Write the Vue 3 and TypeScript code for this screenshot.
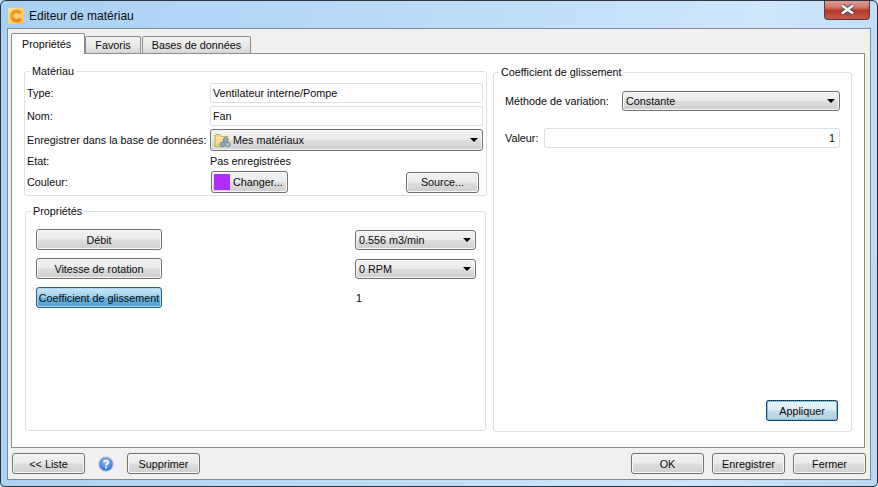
<script setup lang="ts">
const tabs = ['Propriétés', 'Favoris', 'Bases de données']
</script>

<template>
  <div class="window">
    <header class="titlebar">
      <svg class="app-icon" width="16" height="16" viewBox="0 0 16 16">
        <defs>
          <linearGradient id="appbg" x1="0" y1="0" x2="1" y2="1">
            <stop offset="0" stop-color="#fde3a0" />
            <stop offset="1" stop-color="#f8bd4e" />
          </linearGradient>
          <linearGradient id="appc" x1="0" y1="0" x2="1" y2="1">
            <stop offset="0" stop-color="#f6a21e" />
            <stop offset="1" stop-color="#e9820c" />
          </linearGradient>
        </defs>
        <rect width="16" height="16" rx="1" fill="url(#appbg)" />
        <path d="M12.6 5.4A4.8 4.8 0 1 0 12.6 10.6" fill="none" stroke="url(#appc)" stroke-width="3.4" />
      </svg>
      <span class="title">Editeur de matériau</span>
      <div class="close" aria-label="Fermer">
        <svg width="17" height="11" viewBox="0 0 17 11">
          <path d="M3 1.5 14 9.5M14 1.5 3 9.5" stroke="#46505c" stroke-width="4.4" />
          <path d="M3 1.5 14 9.5M14 1.5 3 9.5" stroke="#f4f6f8" stroke-width="2.6" />
        </svg>
      </div>
    </header>

    <main class="panel">
      <nav class="tabs">
        <div v-for="(t, i) in tabs" :key="t" class="tab" :class="{ active: i === 0 }">{{ t }}</div>
      </nav>

      <section class="pane">
        <div class="col-left">
          <fieldset class="group g-mat">
            <legend>Matériau</legend>
            <div class="row r-type">
              <span class="lbl">Type:</span>
              <div class="input">Ventilateur interne/Pompe</div>
            </div>
            <div class="row r-nom">
              <span class="lbl">Nom:</span>
              <div class="input">Fan</div>
            </div>
            <div class="row r-db">
              <span class="lbl">Enregistrer dans la base de données:</span>
              <div class="btn combo combo-db">
                <svg class="folder" width="18" height="18" viewBox="0 0 18 18">
                  <path d="M1 4.5V15h13V5.5H7.5L6 3.5H2z" fill="#f4dc8c" stroke="#c9a850" />
                  <path d="M1.5 7h12" stroke="#fff4c8" />
                  <circle cx="11.5" cy="9" r="2.4" fill="#8fa9c4" stroke="#5a7390" stroke-width=".7" />
                  <circle cx="8.4" cy="13.4" r="2.4" fill="#8fa9c4" stroke="#5a7390" stroke-width=".7" />
                  <circle cx="14" cy="13.6" r="2.4" fill="#a9bdd2" stroke="#5a7390" stroke-width=".7" />
                </svg>
                <span>Mes matériaux</span>
                <i class="arrow"></i>
              </div>
            </div>
            <div class="row r-etat">
              <span class="lbl">Etat:</span>
              <span class="val">Pas enregistrées</span>
            </div>
            <div class="row r-col">
              <span class="lbl">Couleur:</span>
              <div class="btn btn-change"><i class="swatch"></i><span>Changer...</span></div>
              <div class="btn btn-source">Source...</div>
            </div>
          </fieldset>

          <fieldset class="group g-prop">
            <legend>Propriétés</legend>
            <div class="prop">
              <div class="btn btn-prop">Débit</div>
              <div class="btn combo combo-prop"><span>0.556 m3/min</span><i class="arrow"></i></div>
            </div>
            <div class="prop">
              <div class="btn btn-prop">Vitesse de rotation</div>
              <div class="btn combo combo-prop"><span>0 RPM</span><i class="arrow"></i></div>
            </div>
            <div class="prop">
              <div class="btn btn-prop selected">Coefficient de glissement</div>
              <span class="prop-val">1</span>
            </div>
          </fieldset>
        </div>

        <fieldset class="group g-coef">
          <legend>Coefficient de glissement</legend>
          <div class="coef-row first">
            <span class="lbl-m">Méthode de variation:</span>
            <div class="btn combo combo-var"><span>Constante</span><i class="arrow"></i></div>
          </div>
          <div class="coef-row second">
            <span class="lbl-v">Valeur:</span>
            <div class="input num">1</div>
          </div>
          <div class="apply-wrap">
            <div class="btn btn-apply">Appliquer</div>
          </div>
        </fieldset>
      </section>

      <footer class="footer">
        <div class="btn btn-foot">&lt;&lt; Liste</div>
        <svg class="help" width="16" height="16" viewBox="0 0 16 16">
          <defs>
            <radialGradient id="helpbg" cx=".5" cy=".35" r=".7">
              <stop offset="0" stop-color="#9cc2f5" />
              <stop offset="1" stop-color="#2a62c8" />
            </radialGradient>
          </defs>
          <circle cx="8" cy="8" r="7" fill="url(#helpbg)" stroke="#8eb0e4" />
          <path d="M5.9 6.2C6 3.9 10.2 3.9 10.2 6.2 10.2 7.8 8 7.8 8 9.6" fill="none" stroke="#fff" stroke-width="1.7" />
          <rect x="7.1" y="10.6" width="1.8" height="1.8" fill="#fff" />
        </svg>
        <div class="btn btn-foot">Supprimer</div>
        <div class="spacer"></div>
        <div class="btn btn-foot">OK</div>
        <div class="btn btn-foot">Enregistrer</div>
        <div class="btn btn-foot">Fermer</div>
      </footer>
    </main>
  </div>
</template>

<style>
html, body { margin: 0; background: #b9d7f4; }
</style>

<style scoped>
.window {
  box-sizing: border-box;
  width: 878px;
  height: 487px;
  display: flex;
  flex-direction: column;
  padding: 0 6px 6px;
  border: 1px solid #2b3440;
  border-radius: 6px 6px 5px 5px;
  background: linear-gradient(100deg, #a9d0f3 0%, #bcdcf8 45%, #cfe6fb 80%, #b9d8f5 100%);
  font-family: "Liberation Sans", Arial, sans-serif;
  font-size: 10.8px;
  color: #0a0a0a;
  overflow: hidden;
}
.titlebar {
  height: 27px;
  flex: none;
  display: flex;
  align-items: center;
  box-sizing: border-box;
  padding-top: 2px;
  padding-left: 1px;
  position: relative;
}
.title { margin-left: 5px; font-size: 12px; color: #0c0c0c; }
.close {
  position: absolute;
  top: -1px;
  right: 1px;
  width: 46px;
  height: 20px;
  box-sizing: border-box;
  border: 1px solid #5c3a3a;
  border-top: none;
  border-radius: 0 0 4px 4px;
  background: linear-gradient(#e0a49a 0, #d0766a 40%, #b8352a 55%, #c45a48 100%);
  display: flex;
  align-items: center;
  justify-content: center;
}
.panel {
  flex: 1;
  min-height: 0;
  box-sizing: border-box;
  display: flex;
  flex-direction: column;
  background: #f0f0f0;
  border: 1px solid #848a90;
  padding: 3px 5px 0 3px;
}
.tabs { display: flex; height: 21px; flex: none; align-items: flex-end; position: relative; z-index: 1; }
.tab {
  box-sizing: border-box;
  height: 17px;
  border: 1px solid #8d8d8d;
  border-bottom: none;
  margin-right: 1px;
  display: flex;
  align-items: center;
  white-space: nowrap;
  background: linear-gradient(#f3f3f3, #ececec 45%, #d6d6d6);
  border-radius: 2px 2px 0 0;
}
.tab:nth-child(1) { width: 74px; }
.tab:nth-child(2) { width: 56px; justify-content: center; }
.tab:nth-child(3) { width: 109px; justify-content: center; }
.tab.active {
  margin-right: 0;
  background: #fff;
  padding-left: 10px;
  margin-bottom: -1px;
  height: 21px;
}
.pane {
  flex: none;
  height: 395px;
  box-sizing: border-box;
  background: #fff;
  border: 1px solid #8d8d8d;
  display: flex;
  padding: 11px 12px 14px 12px;
  gap: 6px;
}
.col-left { width: 463px; flex: none; display: flex; flex-direction: column; }
.group {
  margin: 0;
  box-sizing: border-box;
  border: 1px solid #d9e2e8;
  border-radius: 3px;
  min-width: 0;
  position: relative;
}
.group legend { padding: 0 2px; line-height: 13px; }
.g-mat { height: 131px; padding: 0 3px 0 2px; }
.g-mat legend { margin-left: 3px; }
.g-prop { height: 226px; margin: 9px 1px 0; padding: 0 9px 0 10px; }
.g-prop legend { margin-left: -5px; }
.g-coef { flex: none; width: 359px; height: 366px; margin-top: 1px; padding: 0 11px; display: flex; flex-direction: column; }
.g-coef legend { margin-left: -6px; }

.row { display: flex; align-items: center; }
.lbl { width: 183px; flex: none; white-space: nowrap; }
.r-type { height: 20px; margin-top: 5px; }
.r-nom { height: 20px; margin-top: 3px; }
.r-db { height: 22px; margin-top: 3px; }
.r-etat { height: 13px; margin-top: 3px; }
.r-col { height: 22px; margin-top: 4px; }
.input {
  box-sizing: border-box;
  flex: 1;
  height: 100%;
  border: 1px solid #d9e2e8;
  border-radius: 2px;
  background: #fff;
  display: flex;
  align-items: center;
  padding: 0 2px;
  white-space: nowrap;
}
.btn {
  box-sizing: border-box;
  border: 1px solid #707070;
  border-radius: 3px;
  background: linear-gradient(#f2f2f2 0, #ebebeb 48%, #dddddd 52%, #cfcfcf 100%);
  box-shadow: inset 0 0 0 1px #f8f8f8;
  display: flex;
  align-items: center;
  justify-content: center;
  white-space: nowrap;
}
.combo { justify-content: flex-start; padding: 0 3px; position: relative; }
.arrow {
  position: absolute;
  right: 4px;
  top: 50%;
  margin-top: -2px;
  width: 0;
  height: 0;
  border-left: 4px solid transparent;
  border-right: 4px solid transparent;
  border-top: 4px solid #000;
}
.combo-db { flex: none; width: 273px; height: 22px; justify-content: flex-start; }
.folder { margin-right: 1px; flex: none; }
.btn-change { width: 77px; height: 22px; margin-left: 1px; justify-content: flex-start; padding-left: 2px; }
.swatch { display: block; width: 16px; height: 16px; background: #b02cff; margin-right: 3px; flex: none; }
.btn-source { width: 73px; height: 21px; margin-left: 118px; }

.prop { display: flex; align-items: center; height: 21px; margin-bottom: 8px; }
.prop:first-of-type { margin-top: 11px; }
.btn-prop { width: 126px; height: 21px; flex: none; }
.combo-prop { width: 121px; height: 20px; margin-left: 193px; flex: none; }
.prop-val { margin-left: 194px; }
.selected {
  background: linear-gradient(#c9e6f6 0, #9dd2ee 48%, #6cb7e2 52%, #4f9fd0 100%);
  border-color: #2c628b;
  box-shadow: inset 0 0 0 1px #a8d6ef;
}
.coef-row { display: flex; align-items: center; }
.first { height: 20px; margin-top: 12px; }
.second { height: 20px; margin-top: 17px; }
.lbl-m { width: 117px; flex: none; white-space: nowrap; }
.lbl-v { width: 39px; flex: none; }
.combo-var { flex: 1; height: 20px; }
.num { justify-content: flex-end; padding-right: 4px; }
.apply-wrap { margin-top: auto; margin-bottom: 10px; display: flex; justify-content: flex-end; padding-right: 2px; }
.btn-apply {
  width: 72px;
  height: 21px;
  border-color: #2c628b;
  background: linear-gradient(#e8f3fa 0, #dcebf5 48%, #c4dceb 52%, #b4d0e2 100%);
  box-shadow: inset 0 0 0 1px #7fc2ea;
  outline: 1px dotted #123;
  outline-offset: -1px;
}
.footer { display: flex; align-items: center; height: 31px; flex: none; margin-left: 1px; margin-right: -1px; }
.btn-foot { width: 73px; height: 21px; flex: none; }
.help { margin: 0 13px; flex: none; }
.spacer { flex: 1; }
.footer .btn-foot:nth-last-child(-n+2) { margin-left: 8px; }
</style>
